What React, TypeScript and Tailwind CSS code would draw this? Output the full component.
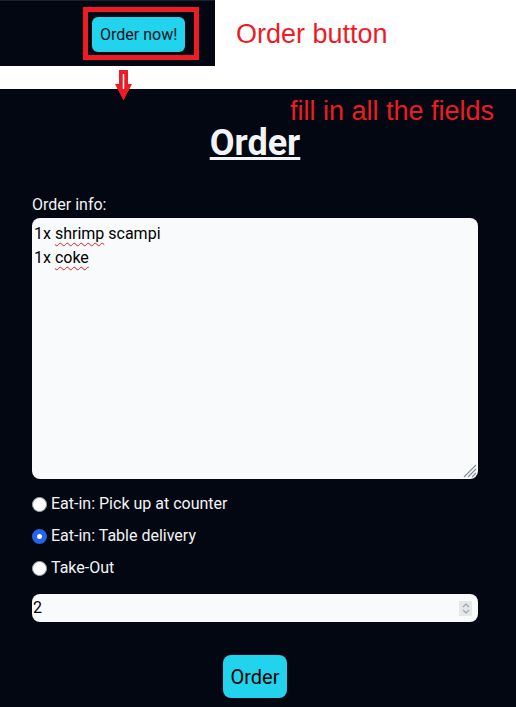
import React from 'react';

const options = [
  { id: 'counter', label: 'Eat-in: Pick up at counter', checked: false },
  { id: 'table', label: 'Eat-in: Table delivery', checked: true },
  { id: 'takeout', label: 'Take-Out', checked: false },
];

const App = () => {
  return (
    <div className="relative flex h-[707px] w-[516px] flex-col overflow-hidden bg-white font-['Roboto',sans-serif]">
      {/* Header strip with annotation */}
      <div className="flex h-[89px] shrink-0">
        <div className="relative h-[66px] w-[215px] border-t border-[#1c2029] bg-[#030712] pl-[92px] pt-[16px]">
          <button className="h-[35px] rounded-md bg-[#22d3ee] px-2 text-base text-[#0b1120]">Order now!</button>
          <div className="pointer-events-none absolute left-[83px] top-[6px] h-[53px] w-[116px] border-[5px] border-[#ed1c24]" />
        </div>
        <p className="ml-[21px] mt-[21px] font-['Liberation_Sans',Arial,sans-serif] text-[27px] leading-[27px] text-[#ed1c24]">
          Order button
        </p>
      </div>

      {/* Arrow annotation */}
      <svg className="absolute left-[115px] top-[70px] z-10" width="17" height="31" viewBox="0 0 17 31">
        <path d="M4 0H13V14H17L8.5 30.5L0 14H4Z" fill="#ed1c24" />
        <line x1="8.5" y1="4" x2="8.5" y2="19" stroke="#fff" strokeWidth="1.5" />
      </svg>

      {/* Order form */}
      <main className="relative flex flex-1 flex-col bg-[#030712] pl-8 pr-[38px]">
        <p className="absolute left-[290px] top-[9px] font-['Liberation_Sans',Arial,sans-serif] text-[27px] leading-[27px] text-[#ed1c24]">
          fill in all the fields
        </p>

        <h1 className="pt-[34px] text-center text-4xl leading-10 font-bold text-gray-100 underline">Order</h1>

        <label className="mt-[30px] text-base leading-6 text-gray-100">Order info:</label>
        <div className="relative mt-px h-[261px] rounded-lg bg-gray-50 px-[2px] pt-[4px] text-base leading-6 text-black">
          <div>
            1x{' '}
            <span className="underline decoration-[#e11d1d] decoration-wavy decoration-1 underline-offset-[3px]">shrimp</span>{' '}
            scampi
          </div>
          <div>
            1x <span className="underline decoration-[#e11d1d] decoration-wavy decoration-1 underline-offset-[3px]">coke</span>
          </div>
          <svg className="absolute bottom-[1px] right-[1px]" width="14" height="14" viewBox="0 0 14 14">
            <path d="M1 13L13 1M5 13L13 5M9 13L13 9" stroke="#8b8f97" strokeWidth="1.2" />
          </svg>
        </div>

        <div className="mt-[13px] flex flex-col gap-2">
          {options.map((o) => (
            <label key={o.id} className="flex items-center gap-1 text-base leading-6 text-gray-100">
              <input
                type="radio"
                name="mode"
                defaultChecked={o.checked}
                className="h-[15px] w-[15px] shrink-0 appearance-none rounded-full border border-gray-400 bg-white checked:border-[5px] checked:border-[#2563eb]"
              />
              {o.label}
            </label>
          ))}
        </div>

        <div className="mt-[14px] flex h-[28px] items-center rounded-lg bg-gray-50 pl-[1px] pr-[6px]">
          <input
            type="text"
            inputMode="numeric"
            defaultValue="2"
            className="min-w-0 flex-1 bg-transparent text-base text-black outline-none"
          />
          <div className="flex h-[15px] w-[13px] flex-col items-center justify-center gap-[1px] bg-[#e5e7eb]">
            <svg width="8" height="5" viewBox="0 0 8 5">
              <path d="M1 4L4 1L7 4" fill="none" stroke="#9ca3af" strokeWidth="1.2" />
            </svg>
            <svg width="8" height="5" viewBox="0 0 8 5">
              <path d="M1 1L4 4L7 1" fill="none" stroke="#9ca3af" strokeWidth="1.2" />
            </svg>
          </div>
        </div>

        <div className="mt-[33px] flex justify-center">
          <button className="h-[43px] rounded-lg bg-[#22d3ee] px-[7px] text-xl text-black">Order</button>
        </div>
      </main>
    </div>
  );
};

export default App;
